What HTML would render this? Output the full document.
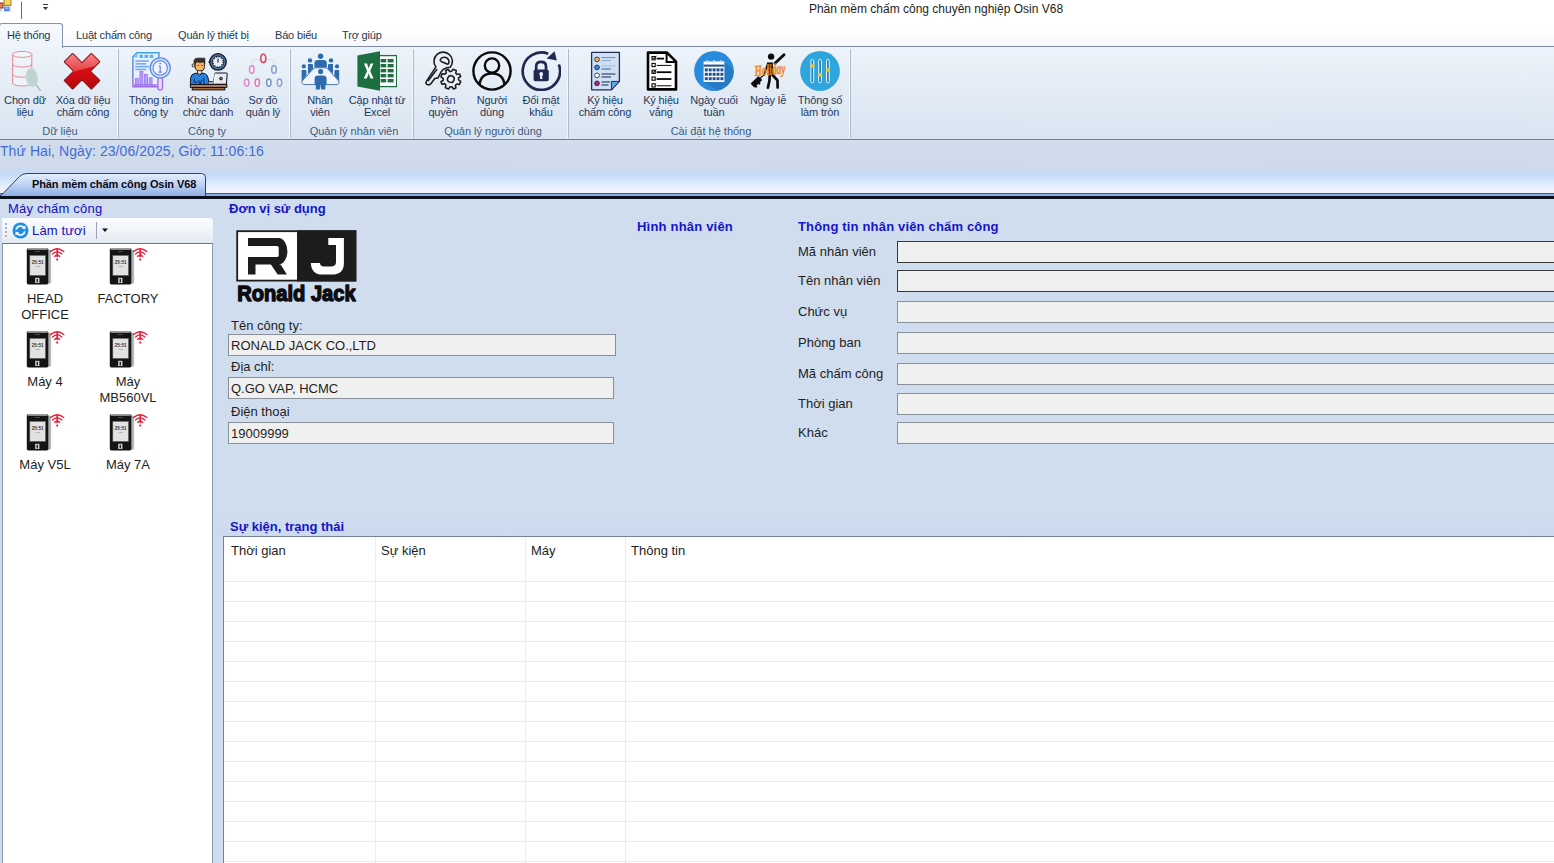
<!DOCTYPE html>
<html lang="vi">
<head>
<meta charset="utf-8">
<title>Phần mềm chấm công chuyên nghiệp Osin V68</title>
<style>
*{box-sizing:border-box;margin:0;padding:0}
html,body{width:1554px;height:863px;overflow:hidden;background:#d0ddee;font-family:"Liberation Sans",sans-serif;color:#1e1e1e}
.abs{position:absolute}
#titlebar{left:0;top:0;width:1554px;height:24px;background:#fff}
#title{left:736px;top:2px;width:400px;text-align:center;font-size:12px;line-height:14px;color:#1e1e1e;white-space:nowrap}
#tabrow{left:0;top:22px;width:1554px;height:25px;background:linear-gradient(#fff 0,#fff 35%,#f6f8fc 100%);border-bottom:1px solid #7d8da6}
.rtab{top:29px;font-size:11px;line-height:13px;color:#263850;white-space:nowrap;letter-spacing:-.17px}
#acttab{left:-1px;top:23px;width:64px;height:25px;background:linear-gradient(#f7fafd,#eef3fa);border:1px solid #8294ae;border-bottom:none;border-radius:3px 3px 0 0}
#ribbon{left:0;top:47px;width:1554px;height:93px;background:linear-gradient(#edf3fa 0,#e2ebf5 50%,#d9e5f2 100%);border-bottom:1px solid #747f90}
.sep{top:49px;width:1px;height:89px;background:#aebbcd;box-shadow:-1px 0 0 #f4f8fc}
.glab{top:125px;font-size:11px;line-height:13px;color:#3b5a82;text-align:center;white-space:nowrap}
.btn{top:94px;font-size:11px;line-height:12px;color:#1e395b;text-align:center;white-space:nowrap;letter-spacing:-.15px}
.ico{top:51px;width:40px;height:40px}
#datebar{left:0;top:140px;width:1554px;height:30px;background:linear-gradient(#d3deed 0,#cfdbeb 6px,#cfdbeb 100%)}
#date{left:0;top:143px;font-size:14px;line-height:16px;color:#426bd6;white-space:nowrap;letter-spacing:.07px}
#tabstrip{left:0;top:166px;width:1554px;height:30px;background:linear-gradient(#cfdbeb 0,#cbdaf0 4px,#c5d9f7 8px,#cfe0fa 12px,#e4eefc 20px,#f5f8fe 26.9px,#35558c 27px,#35558c 27.9px,#8faee3 28px,#8faee3 30px)}
#darkline{left:0;top:196px;width:1554px;height:3px;background:#0b1020}
#main{left:0;top:199px;width:1554px;height:664px;background:#d0ddee}
.blue{color:#1010c0}
.lbl{font-size:12px;line-height:14px;white-space:nowrap;color:#1e1e1e}
.hd{font-size:12px;line-height:14px;font-weight:bold;color:#1515c8;white-space:nowrap}
.inp{height:22px;background:#f0f0f0;border:1px solid #8a9098;font-size:13px;line-height:20px;padding-left:2px;padding-top:1px;white-space:nowrap;color:#1e1e1e}
.inpd{height:22px;background:#f0f0f0;border:1px solid #3a3a3a}
.lbl13{font-size:13px;line-height:15px;white-space:nowrap;color:#1e1e1e}
.dev{font-size:13px;line-height:16px;text-align:center;width:84px;color:#1e1e1e}
</style>
</head>
<body>
<div id="titlebar" class="abs"></div>
<div id="title" class="abs">Phần mềm chấm công chuyên nghiệp Osin V68</div>
<div id="tabrow" class="abs"></div>
<svg class="abs" style="left:0;top:0" width="60" height="22" viewBox="0 0 60 22">
<rect x="-1" y="3" width="4" height="5" fill="#e8825e" stroke="#8c3220" stroke-width="1"/>
<rect x="4" y="-1" width="7" height="6.4" fill="#f8d25c" stroke="#a47c1c" stroke-width="1"/>
<rect x="4" y="6.6" width="5.6" height="4.4" fill="#4a86e4"/><rect x="5" y="7.2" width="3.4" height="2" fill="#8ab8f8"/>
<path d="M1 8.4 L1 11.4" stroke="#9a9a9a" stroke-width="1"/>
<path d="M10.6 6 L10.6 11.6 L3 11.6" stroke="#d8d0e0" stroke-width=".8" fill="none"/>
<path d="M21.5 1.6 L21.5 19" stroke="#6a6a6a" stroke-width="1"/>
<rect x="43" y="4" width="5" height="1" fill="#3a3a3a"/>
<path d="M42.8 6.9 L48.2 6.9 L45.5 9.9Z" fill="#3a3a3a"/>
</svg>

<div id="ribbon" class="abs"></div>
<div id="acttab" class="abs"></div>
<div class="abs rtab" style="left:7px">Hệ thống</div>
<div class="abs rtab" style="left:76px">Luật chấm công</div>
<div class="abs rtab" style="left:178px">Quản lý thiết bị</div>
<div class="abs rtab" style="left:275px">Báo biểu</div>
<div class="abs rtab" style="left:342px">Trợ giúp</div>
<div class="abs sep" style="left:118px"></div>
<div class="abs sep" style="left:290px"></div>
<div class="abs sep" style="left:413px"></div>
<div class="abs sep" style="left:568px"></div>
<div class="abs sep" style="left:850px"></div>
<div class="abs glab" style="left:20px;width:80px">Dữ liệu</div>
<div class="abs glab" style="left:147px;width:120px">Công ty</div>
<div class="abs glab" style="left:294px;width:120px">Quản lý nhân viên</div>
<div class="abs glab" style="left:433px;width:120px">Quản lý người dùng</div>
<div class="abs glab" style="left:651px;width:120px">Cài đặt hệ thống</div>
<div class="abs btn" style="left:-15px;width:80px">Chọn dữ<br>liệu</div>
<div class="abs btn" style="left:43px;width:80px">Xóa dữ liệu<br>chấm công</div>
<div class="abs btn" style="left:111px;width:80px">Thông tin<br>công ty</div>
<div class="abs btn" style="left:168px;width:80px">Khai báo<br>chức danh</div>
<div class="abs btn" style="left:223px;width:80px">Sơ đồ<br>quản lý</div>
<div class="abs btn" style="left:280px;width:80px">Nhân<br>viên</div>
<div class="abs btn" style="left:337px;width:80px">Cập nhật từ<br>Excel</div>
<div class="abs btn" style="left:403px;width:80px">Phân<br>quyền</div>
<div class="abs btn" style="left:452px;width:80px">Người<br>dùng</div>
<div class="abs btn" style="left:501px;width:80px">Đổi mật<br>khẩu</div>
<div class="abs btn" style="left:565px;width:80px">Ký hiệu<br>chấm công</div>
<div class="abs btn" style="left:621px;width:80px">Ký hiệu<br>vắng</div>
<div class="abs btn" style="left:674px;width:80px">Ngày cuối<br>tuần</div>
<div class="abs btn" style="left:728px;width:80px">Ngày lễ</div>
<div class="abs btn" style="left:780px;width:80px">Thông số<br>làm tròn</div>
<!--ICONS_START-->
<!-- 1 db + magnifier -->
<svg class="abs ico" style="left:5px" viewBox="0 0 40 40">
<path d="M7.6 3.4 L7.6 32 A9.6 3 0 0 0 26.8 32 L26.8 3.4" fill="#eef3fa" stroke="#e3808c" stroke-width=".9"/>
<ellipse cx="17.2" cy="3.4" rx="9.6" ry="3" fill="#f4f6fb" stroke="#e3808c" stroke-width=".9"/>
<path d="M7.6 13.1 A9.6 3 0 0 0 26.8 13.1 M7.6 23.2 A9.6 3 0 0 0 26.8 23.2" fill="none" stroke="#e3808c" stroke-width=".9"/>
<path d="M30.6 33 L35.2 39.4" stroke="#b4bcc8" stroke-width="1.7" stroke-linecap="round"/>
<ellipse cx="26.9" cy="26.4" rx="5.4" ry="8.8" fill="#bdd5d1" stroke="#cdd2dc" stroke-width="1.5" transform="rotate(-8 26.9 26.4)"/>
</svg>
<!-- 2 red X -->
<svg class="abs ico" style="left:62px" viewBox="0 0 40 40">
<defs><linearGradient id="rx" x1="0" y1="0" x2="0" y2="1"><stop offset="0" stop-color="#e42830"/><stop offset=".5" stop-color="#d80c14"/><stop offset="1" stop-color="#b6060c"/></linearGradient>
<linearGradient id="rg" x1="0" y1="0" x2="0" y2="1"><stop offset="0" stop-color="#ffc8c8" stop-opacity=".62"/><stop offset="1" stop-color="#ff9a9a" stop-opacity=".3"/></linearGradient>
<clipPath id="xc"><path d="M10.2 2.2 L20 12.2 L29.8 2.2 L38 10.4 L28 20.2 L38 30 L29.8 38.2 L20 28.4 L10.2 38.2 L2 30 L12 20.2 L2 10.4 Z"/></clipPath></defs>
<g transform="translate(20 20.2) scale(.955) translate(-20 -20.2)">
<path d="M10.2 2.2 L20 12.2 L29.8 2.2 L38 10.4 L28 20.2 L38 30 L29.8 38.2 L20 28.4 L10.2 38.2 L2 30 L12 20.2 L2 10.4 Z" fill="url(#rx)" stroke="#7e1418" stroke-width="2.2" stroke-linejoin="round"/>
<path d="M10.2 2.2 L20 12.2 L29.8 2.2 L38 10.4 L28 20.2 L38 30 L29.8 38.2 L20 28.4 L10.2 38.2 L2 30 L12 20.2 L2 10.4 Z" fill="url(#rx)" stroke="#c41820" stroke-width=".6" stroke-linejoin="round"/>
<path d="M0 0 H40 V14 Q24 16 0 25 Z" fill="url(#rg)" clip-path="url(#xc)"/>
</g>
</svg>
<!-- 3 thong tin cong ty -->
<svg class="abs ico" style="left:131px" viewBox="0 0 40 40">
<defs><linearGradient id="tt" x1="0" y1="0" x2="0" y2="1"><stop offset="0" stop-color="#3fa6e4"/><stop offset=".5" stop-color="#6c7fe0"/><stop offset="1" stop-color="#ab68ec"/></linearGradient></defs>
<g transform="translate(.9 .3)">
<path d="M5 1.5 L27 1.5 L27 35.5 L1 35.5 L1 5.5 Z" fill="#e9f1fc"/>
<path d="M27 8 L27 1.5 L5 1.5 L1 5.5 L1 35.5 L27 35.5 L27 30" fill="none" stroke="url(#tt)" stroke-width="1.5"/>
<path d="M1 5.5 L5 5.5 L5 1.5" fill="none" stroke="#4fb4f4" stroke-width="1"/>
<g fill="#58b0f0"><rect x="7.5" y="3.5" width="3.6" height="3.2"/><rect x="12.6" y="3.5" width="3.6" height="3.2"/><rect x="17.7" y="3.5" width="3.6" height="3.2"/></g>
<g fill="#6aa6f4"><rect x="3.4" y="9" width="13.6" height="1.5"/><rect x="3.4" y="11.8" width="11" height="1.5"/><rect x="3.4" y="14.6" width="13.6" height="1.5"/><rect x="3.4" y="17.4" width="11" height="1.5"/></g>
<g fill="#b59af6" stroke="#9470ec" stroke-width=".7"><rect x="3.4" y="27" width="3" height="6.6"/><rect x="8" y="20" width="3" height="13.6"/><rect x="12.6" y="23" width="3" height="10.6"/><rect x="17.2" y="26.5" width="3" height="7.1"/><rect x="2.4" y="33.4" width="22" height="1.2"/></g>
<rect x="26" y="26" width="4.6" height="12.8" rx="2.3" fill="#eadcfb" stroke="#a468ec" stroke-width="1.3"/>
<circle cx="28.3" cy="16.6" r="10" fill="#d6e6fc" stroke="#5f8fe8" stroke-width="1.4"/>
<circle cx="28.3" cy="16.6" r="7.2" fill="#eef5fe" stroke="#6f86e8" stroke-width="1.2"/>
<path d="M28.3 14.8 L28.3 20.6 M26.6 20.8 L30 20.8 M26.8 14.8 L28.3 14.8" stroke="#6f80e8" stroke-width="1.2" fill="none"/><circle cx="28.3" cy="12.3" r=".95" fill="#6f80e8"/>
</g>
</svg>
<!-- 4 khai bao chuc danh -->
<svg class="abs ico" style="left:189px" viewBox="0 0 40 40">
<circle cx="20.4" cy="10.9" r="1" fill="#101828"/>
<circle cx="29" cy="10.9" r="8.2" fill="#4d7399" stroke="#0e1626" stroke-width="1.3"/>
<circle cx="29" cy="10.9" r="5.7" fill="#e9f0f9" stroke="#0e1626" stroke-width=".8"/>
<circle cx="29" cy="10.9" r="5" fill="none" stroke="#26334a" stroke-width="1.5" stroke-dasharray=".9 1.718"/>
<path d="M29 7.4 L29 11.6" stroke="#0e1626" stroke-width="1.1" fill="none"/>
<ellipse cx="4.6" cy="14.4" rx="1.5" ry="1.7" fill="#f8c48a" stroke="#14100e" stroke-width=".8"/>
<path d="M6.2 10.6 L15.4 10.6 L15.4 15.6 Q15.4 20.2 10.8 20.2 Q6.2 20.2 6.2 15.6Z" fill="#f9b465" stroke="#14100e" stroke-width=".9"/>
<path d="M5 11.6 Q4.6 7.2 8.6 7.2 L15.8 7.2 L15.8 12.4 L14.4 10.8 L11 11.4 L7.4 10.6 L6.4 12.8 Z" fill="#3a3232" stroke="#14100e" stroke-width=".7" stroke-linejoin="round"/>
<circle cx="9.2" cy="14.4" r=".55" fill="#2a1a14"/><circle cx="13" cy="14.4" r=".55" fill="#2a1a14"/>
<rect x="8.6" y="19.8" width="4.2" height="3.2" fill="#fbe6cf" stroke="#14100e" stroke-width=".7"/>
<path d="M1.4 33.4 L1.6 27 Q2 23 6 22.4 L8.4 22.2 L10.7 24.4 L13 22.2 L15 22.4 Q18 23 18.8 26 L19.8 30.8 L23.4 30.8 L23.4 33.4Z" fill="#2b82e2" stroke="#0e1626" stroke-width="1"/>
<path d="M5.2 27.4 L5.2 31 L8.6 31 M14.6 26.6 L15.2 33 M9.6 29.4 L11.2 33 L12.8 28.6" stroke="#12305e" stroke-width="1.1" fill="none"/>
<rect x="19.2" y="31" width="6.6" height="2" fill="#eceef2" stroke="#0e1626" stroke-width=".6"/>
<path d="M26 22 L37.6 22 Q38.4 22 38.2 22.8 L37.4 33.2 L24.2 33.2Z" fill="#e9ebf1" stroke="#0e1018" stroke-width="1"/>
<path d="M26.4 22.6 L25 32.6" stroke="#fafbfd" stroke-width="1.4"/>
<circle cx="32" cy="27.6" r="1.8" fill="#1c2028"/><circle cx="32.2" cy="27.4" r=".6" fill="#c8ccd4"/>
<rect x="1.4" y="33.6" width="36.4" height="2.7" fill="#c2946a" stroke="#0e1018" stroke-width="1"/>
<rect x="3.2" y="36.5" width="32.6" height="2.4" fill="#a36a3c" stroke="#0e1018" stroke-width="1"/>
</svg>
<!-- 5 so do quan ly -->
<svg class="abs ico" style="left:243px" viewBox="0 0 40 40">
<path d="M8.8 14.6 L8.8 10.4 Q8.8 8.4 10.8 8.4 L17.4 8.4 M23.2 8.4 L29 8.4 Q31 8.4 31 10.4 L31 14.6" fill="none" stroke="#e2d6e4" stroke-width="1"/>
<g stroke-width="1.55">
<ellipse cx="20.3" cy="7.4" rx="2.5" ry="4.1" stroke="#cc4668" fill="#fbeff3"/>
<ellipse cx="8.8" cy="18.5" rx="2.3" ry="3.7" stroke="#d98ccf" fill="#fbf2fa"/>
<ellipse cx="31" cy="18.5" rx="2.3" ry="3.7" stroke="#84a4d0" fill="#f2f6fc"/>
<ellipse cx="3.7" cy="31.6" rx="2.2" ry="3.7" stroke="#d98ccf" fill="#fbf2fa"/>
<ellipse cx="14.3" cy="31.6" rx="2.2" ry="3.7" stroke="#de7cb0" fill="#fbf2fa"/>
<ellipse cx="25.8" cy="31.6" rx="2.2" ry="3.7" stroke="#7496c8" fill="#f2f6fc"/>
<ellipse cx="36.5" cy="31.6" rx="2.2" ry="3.7" stroke="#86a6cc" fill="#f2f6fc"/>
</g>
</svg>
<!-- 6 nhan vien -->
<svg class="abs ico" style="left:300px" viewBox="0 0 40 40">
<g fill="#2c6cae">
<circle cx="20.6" cy="5.2" r="2.7"/><path d="M14.4 16.6 L14.4 12.4 Q14.4 9 17.8 9 L23.4 9 Q26.8 9 26.8 12.4 L26.8 16.6Z"/>
<circle cx="10" cy="9.4" r="2.2"/><path d="M8 13 L12 13 Q13 13 13 14.2 L13 18 L8 23Z"/>
<circle cx="31" cy="9.4" r="2.2"/><path d="M33 13 L29 13 Q28 13 28 14.2 L28 18 L33 23Z"/>
<circle cx="3.8" cy="15.4" r="2.1"/><path d="M1.6 19 L5.4 19 Q6.4 19 6.4 20 L6.4 24.6 L1.6 30.6Z"/>
<circle cx="37" cy="15.4" r="2.1"/><path d="M39.2 19 L35.4 19 Q34.4 19 34.4 20 L34.4 24.6 L39.2 30.6Z"/>
</g>
<path d="M14.4 16.8 L26.8 16.8 L38.6 30 Q40 33.4 36 33.6 L5 33.6 Q1 33.4 2.2 30Z" fill="#f2f6fc" stroke="#3c6a9c" stroke-width=".9"/>
<g fill="#2c6cae"><circle cx="20.6" cy="20.6" r="2.6"/><path d="M14.6 34 L14.6 28 Q14.6 24.6 18 24.6 L23.2 24.6 Q26.6 24.6 26.6 28 L26.6 34 L25.4 34 L25.4 38.6 L21.2 38.6 L20.6 33 L20 38.6 L15.8 38.6 L15.8 34Z"/></g>
</svg>
<!-- 7 excel -->
<svg class="abs ico" style="left:357px" viewBox="0 0 40 40">
<rect x="20" y="4.6" width="19.6" height="31" fill="#fff" stroke="#1d6f42" stroke-width="1.3"/>
<g fill="#1d6f42"><rect x="23.6" y="8" width="5.6" height="3.4"/><rect x="30.6" y="8" width="6" height="3.4"/><rect x="23.6" y="13" width="5.6" height="3.4"/><rect x="30.6" y="13" width="6" height="3.4"/><rect x="23.6" y="18" width="5.6" height="3.4"/><rect x="30.6" y="18" width="6" height="3.4"/><rect x="23.6" y="23" width="5.6" height="3.4"/><rect x="30.6" y="23" width="6" height="3.4"/><rect x="23.6" y="28" width="5.6" height="3.4"/><rect x="30.6" y="28" width="6" height="3.4"/></g>
<path d="M0.4 4.6 L23 0.2 L23 39.8 L0.4 35.4Z" fill="#1d6f42"/>
<path d="M7 12.6 L10 12.6 L11.7 17.4 L13.5 12.6 L16.3 12.6 L13.2 20 L16.5 27.6 L13.5 27.6 L11.6 22.6 L9.8 27.6 L6.8 27.6 L10.1 20Z" fill="#fff"/>
</svg>
<!-- 8 phan quyen -->
<svg class="abs ico" style="left:423px" viewBox="0 0 40 40">
<g fill="none" stroke="#1e1e1e" stroke-width="1.6" stroke-linejoin="round" stroke-linecap="round">
<path d="M12.85 15.84 L3.4 30.4 Q2.2 32.8 4.4 33.6 Q6.6 34.4 8 32.6 L11.8 27.5 L15 26.9 L18.4 20.4 Q21.5 16.4 27.25 16.2 A9.2 9.2 0 1 0 12.85 15.84 Z"/>
<path d="M17.4 8.4 Q19 5.4 23 6.6 Q26.4 8 25.8 12 Q25.4 13.4 24 13 L18.2 10.4 Q16.8 9.6 17.4 8.4 Z"/>
<path d="M13.7 18.6 L5.4 29.6"/>
</g>
<g transform="translate(27.9 27.9) rotate(22.5)"><path d="M-1.7 -9.8 L1.7 -9.8 L2.3 -7.2 L4 -6.4 L6.2 -7.9 L8.1 -6 L6.6 -3.8 L7.4 -2.1 L10 -1.5 L10 1.9 L7.4 2.5 L6.6 4.2 L8.1 6.4 L6.2 8.3 L4 6.8 L2.3 7.6 L1.7 10.2 L-1.7 10.2 L-2.3 7.6 L-4 6.8 L-6.2 8.3 L-8.1 6.4 L-6.6 4.2 L-7.4 2.5 L-10 1.9 L-10 -1.5 L-7.4 -2.1 L-6.6 -3.8 L-8.1 -6 L-6.2 -7.9 L-4 -6.4 L-2.3 -7.2 Z" fill="#ecf1f9" stroke="#1e1e1e" stroke-width="1.6" stroke-linejoin="round"/><circle cx="0" cy=".2" r="3.3" fill="#ecf1f9" stroke="#1e1e1e" stroke-width="1.6"/></g>
</svg>
<!-- 9 nguoi dung -->
<svg class="abs ico" style="left:472px" viewBox="0 0 40 40">
<circle cx="20" cy="20" r="18.6" fill="none" stroke="#0a0a0a" stroke-width="2.4"/>
<circle cx="20" cy="14.6" r="7.2" fill="none" stroke="#0a0a0a" stroke-width="2.4"/>
<path d="M7.4 33.4 Q9 22.6 20 22.4 Q31 22.6 32.6 33.4" fill="none" stroke="#0a0a0a" stroke-width="2.4"/>
</svg>
<!-- 10 doi mat khau -->
<svg class="abs ico" style="left:521px" viewBox="0 0 40 40">
<path d="M37.8 13.4 A18.7 18.7 0 1 1 27.2 2.8" fill="none" stroke="#1e2a52" stroke-width="2.7"/>
<path d="M25.6 7.4 L33.6 0.2 L35.8 9.4Z" fill="#1e2a52"/>
<path d="M15.2 19 L15.2 15.4 Q15.2 10.8 20.1 10.8 Q25 10.8 25 15.4 L25 19" fill="none" stroke="#1e2a52" stroke-width="2.7"/>
<rect x="12.6" y="18.4" width="15.2" height="11.8" rx="1.8" fill="#1e2a52"/>
<circle cx="20.2" cy="23" r="1.9" fill="#eef3fa"/><path d="M19.3 23.6 L21.1 23.6 L21.4 28 L19 28Z" fill="#eef3fa"/>
</svg>
<!-- 11 ky hieu cham cong -->
<svg class="abs ico" style="left:585px" viewBox="0 0 40 40">
<path d="M6.6 1.4 L34.4 1.4 L34.4 30.4 L26.4 38.8 L6.6 38.8Z" fill="#cfe0f5" stroke="#1e2f58" stroke-width="1.3" stroke-linejoin="round"/>
<path d="M26.4 38.8 L26.4 30.4 L34.4 30.4Z" fill="#5aa6e6" stroke="#1e2f58" stroke-width="1" stroke-linejoin="round"/>
<circle cx="12" cy="8.4" r="2.4" fill="#f2b64a" stroke="#1e2f58" stroke-width=".9"/>
<circle cx="12" cy="16.4" r="2.4" fill="#3a88d8" stroke="#1e2f58" stroke-width=".9"/>
<circle cx="12" cy="24.4" r="2.4" fill="#fff" stroke="#1e2f58" stroke-width=".9"/>
<circle cx="12" cy="32.4" r="2.4" fill="#c0206c" stroke="#1e2f58" stroke-width=".9"/>
<g stroke-linecap="butt" fill="none">
<path d="M16.4 6.6 L30.4 6.6" stroke="#6c8cc0" stroke-width="1"/><path d="M16.4 9.6 L26 9.6" stroke="#8aa6d0" stroke-width="1"/>
<path d="M16.4 15 L30.4 15" stroke="#a4b8d8" stroke-width="1"/><path d="M16.4 18 L26 18" stroke="#4c68a0" stroke-width="1.1"/>
<path d="M16.4 23 L30.4 23" stroke="#1e2f58" stroke-width="1.05"/><path d="M16.4 26 L26 26" stroke="#1e2f58" stroke-width="1.05"/>
<path d="M16.4 31 L25 31" stroke="#1e2f58" stroke-width="1.05"/><path d="M16.4 34 L23.4 34" stroke="#1e2f58" stroke-width="1.05"/>
</g>
</svg>
<!-- 12 ky hieu vang -->
<svg class="abs ico" style="left:641px" viewBox="0 0 40 40">
<path d="M7 1.6 L26 1.6 L35 10.6 L35 38.4 L7 38.4Z" fill="#fff" stroke="#050505" stroke-width="2.6" stroke-linejoin="round"/>
<path d="M25.6 2 L25.6 11 L34.6 11" fill="none" stroke="#050505" stroke-width="2"/>
<g fill="#fff" stroke="#050505" stroke-width="1.1"><rect x="11" y="5.6" width="3.2" height="3.2"/><rect x="11" y="12.4" width="3.2" height="3.2"/><rect x="11" y="19.2" width="3.2" height="3.2"/><rect x="11" y="26" width="3.2" height="3.2"/><rect x="11" y="32.8" width="3.2" height="3.2"/></g>
<g stroke="#050505" fill="none"><path d="M15.6 7.6 L23 7.6" stroke-width="1.8"/><path d="M15.6 14.4 L30.4 14.4" stroke-width="1"/><path d="M15.6 21.2 L30.4 21.2" stroke-width="1.8"/><path d="M15.6 28 L30.4 28" stroke-width="1.8"/><path d="M15.6 34.8 L30.4 34.8" stroke-width="1"/>
<path d="M11.6 6.6 L12.6 8 L15.4 4.8 M11.6 20.2 L12.6 21.6 L15.4 18.4" stroke-width="1"/></g>
</svg>
<!-- 13 ngay cuoi tuan -->
<svg class="abs ico" style="left:694px" viewBox="0 0 40 40">
<circle cx="20" cy="20" r="19.9" fill="#2a8bdc"/>
<path d="M30.4 10.4 L39.6 19.8 A19.9 19.9 0 0 1 23 39.6 L9.8 31 Z" fill="#2579c6"/>
<rect x="9.6" y="10.4" width="20.8" height="20.6" fill="#fff"/>
<rect x="9.6" y="13.6" width="20.8" height="2" fill="#1f4f96"/>
<g fill="#1f4f96">
<rect x="10.8" y="17.4" width="3" height="3"/><rect x="14.7" y="17.4" width="3" height="3"/><rect x="18.6" y="17.4" width="3" height="3"/><rect x="22.5" y="17.4" width="3" height="3"/><rect x="26.4" y="17.4" width="3" height="3"/>
<rect x="10.8" y="21.8" width="3" height="3"/><rect x="14.7" y="21.8" width="3" height="3"/><rect x="18.6" y="21.8" width="3" height="3"/><rect x="22.5" y="21.8" width="3" height="3"/><rect x="26.4" y="21.8" width="3" height="3"/>
<rect x="10.8" y="26.2" width="3" height="3"/><rect x="14.7" y="26.2" width="3" height="3"/><rect x="18.6" y="26.2" width="3" height="3"/><rect x="22.5" y="26.2" width="3" height="3"/><rect x="26.4" y="26.2" width="3" height="3"/></g>
<g fill="#cfe2f6"><rect x="12.6" y="9.2" width="1.6" height="2.8"/><rect x="19.2" y="9.2" width="1.6" height="2.8"/><rect x="25.8" y="9.2" width="1.6" height="2.8"/></g>
</svg>
<!-- 14 ngay le -->
<svg class="abs ico" style="left:748px" viewBox="0 0 40 40">
<g fill="none" stroke="#0c0c0e" stroke-linecap="round" stroke-linejoin="round">
<path d="M27 12.2 L36 3.8" stroke-width="2.9"/>
<path d="M22 11.6 L23.2 23.4" stroke-width="5.2" stroke-linecap="butt"/>
<path d="M21.8 23.8 L21.4 30 L19.9 36.8" stroke-width="2.7"/>
<path d="M24.6 24 L29.5 29.4 L29.6 36.6" stroke-width="2.7"/>
<path d="M20 12.4 L16.2 23.8" stroke-width="2"/>
<path d="M15.8 24.2 L12.4 27" stroke-width="1.1"/>
</g>
<circle cx="23.1" cy="5.6" r="3.2" fill="#0c0c0e"/>
<g transform="translate(8.4 30.8) rotate(-44)" fill="#0c0c0e"><rect x="-5.5" y="-2.8" width="11" height="5.6" rx="1"/><rect x="-4.6" y="2.4" width="2.2" height="1.8" rx=".6"/><rect x="-.2" y="2.4" width="2.2" height="1.8" rx=".6"/></g>
<text x="0" y="0" font-family="Liberation Serif, serif" font-style="italic" font-weight="bold" font-size="9.4" fill="#f0861e" stroke="#f0861e" stroke-width=".45" fill-opacity=".92" stroke-opacity=".8" transform="translate(7 25) rotate(-5) scale(1 1.6)">Holiday</text>
</svg>
<!-- 15 thong so lam tron -->
<svg class="abs ico" style="left:800px" viewBox="0 0 40 40">
<circle cx="20" cy="20" r="19.9" fill="#2fa5de"/>
<g fill="#2285bd" stroke="#eaf5fc" stroke-width="1"><rect x="10.9" y="8.4" width="2.8" height="23.4" rx="1.4"/><rect x="18.7" y="8.4" width="2.8" height="23.4" rx="1.4"/><rect x="26.5" y="8.4" width="2.8" height="23.4" rx="1.4"/></g>
<g fill="#f2c432"><rect x="10.2" y="13.2" width="4.2" height="3.4" rx=".8"/><rect x="18" y="22" width="4.2" height="3.4" rx=".8"/><rect x="25.8" y="17.2" width="4.2" height="3.4" rx=".8"/></g>
</svg>
<!--ICONS_END-->

<div id="datebar" class="abs"></div>
<div id="tabstrip" class="abs"></div>
<div id="date" class="abs">Thứ Hai, Ngày: 23/06/2025, Giờ: 11:06:16</div>
<div id="darkline" class="abs"></div>
<div id="main" class="abs"></div>
<div class="abs" style="left:213px;top:516px;width:1341px;height:21px;background:linear-gradient(#d0ddee,#ccdaf1)"></div>
<svg class="abs" style="left:0;top:172px" width="210" height="24" viewBox="0 0 210 24">
<defs><linearGradient id="tg" x1="0" y1="0" x2="0" y2="1"><stop offset="0" stop-color="#e6effc"/><stop offset=".45" stop-color="#bfd3f3"/><stop offset="1" stop-color="#86a8e0"/></linearGradient></defs>
<path d="M-3 26 L2 22.5 L19.5 4.5 Q22.5 1.5 27 1.5 L201.5 1.5 Q205.5 1.5 205.5 5.5 L205.5 26 Z" fill="url(#tg)" stroke="#2a4068" stroke-width="1"/>
</svg>
<div class="abs" style="left:32px;top:178px;font-size:11px;line-height:13px;font-weight:bold;color:#0a0a14;white-space:nowrap;letter-spacing:-0.1px">Phần mềm chấm công Osin V68</div>

<div class="abs blue" style="left:8px;top:201px;font-size:13px;line-height:15px;white-space:nowrap;letter-spacing:.2px">Máy chấm công</div>
<div class="abs" style="left:2px;top:218px;width:211px;height:25px;background:linear-gradient(#fbfcfe,#eef2f8 60%,#e4eaf3);border-radius:0 4px 0 0"></div>
<div class="abs" style="left:5px;top:223px;width:2px;height:15px;background:repeating-linear-gradient(#aab4c4 0,#aab4c4 2px,transparent 2px,transparent 4px)"></div>
<svg class="abs" style="left:12px;top:222px" width="17" height="17" viewBox="0 0 17 17"><circle cx="8.5" cy="8.5" r="8" fill="#1e8fe8"/><path d="M4.2 7.6 A4.4 4.4 0 0 1 12.2 6" fill="none" stroke="#fff" stroke-width="1.7"/><path d="M12.8 9.4 A4.4 4.4 0 0 1 4.8 11" fill="none" stroke="#fff" stroke-width="1.7"/><path d="M13.6 3.6 L13.4 7.4 L9.8 6.2Z" fill="#fff"/><path d="M3.4 13.4 L3.6 9.6 L7.2 10.8Z" fill="#fff"/></svg>
<div class="abs blue" style="left:32px;top:223px;font-size:13px;line-height:15px;white-space:nowrap;letter-spacing:.15px">Làm tươi</div>
<div class="abs" style="left:96px;top:222px;width:1px;height:17px;background:#9aa6b8"></div>
<svg class="abs" style="left:101px;top:227px" width="8" height="6" viewBox="0 0 8 6"><path d="M1 1.5 L7 1.5 L4 5Z" fill="#111"/></svg>
<div class="abs" style="left:2px;top:243px;width:211px;height:625px;background:#fff;border:1px solid #8c9ab0;border-top-color:#70757c"></div>
<svg width="0" height="0" style="position:absolute"><defs>
<linearGradient id="dvs" x1="0" y1="0" x2="1" y2="0"><stop offset="0" stop-color="#8a8a8a"/><stop offset="1" stop-color="#c8c8c8"/></linearGradient>
<g id="dv">
<path d="M22.5 2.2 L26.2 3 L26.2 36 L22.5 37.2Z" fill="url(#dvs)"/>
<rect x="1.8" y="1" width="21.4" height="36.4" rx="1.6" fill="#141414"/>
<rect x="2.6" y="1.2" width="20" height="1.5" fill="#bdbdbd"/>
<rect x="4.8" y="8.3" width="15.8" height="20.2" fill="#e2e2e2"/>
<rect x="4.8" y="8.3" width="15.8" height="20.2" fill="none" stroke="#555" stroke-width=".6"/>
<text x="12.7" y="16.6" text-anchor="middle" font-family="Liberation Sans, sans-serif" font-weight="bold" font-size="4.6" fill="#333">25:51</text>
<rect x="10.5" y="19.2" width="4.5" height=".6" fill="#999"/>
<rect x="10" y="4.3" width="5" height=".7" fill="#666"/>
<rect x="10.2" y="30.8" width="4.2" height="5.2" fill="#d8d8d8"/>
<rect x="11.6" y="31.8" width="1.4" height="3.6" fill="#222"/>
<g fill="none" stroke="#e8223c" stroke-linecap="round">
<path d="M25.6 4.6 Q32.2 -1.2 38.8 4.6" stroke-width="1.3"/>
<path d="M27.6 7 Q32.2 2.8 36.8 7" stroke-width="1.3"/>
<path d="M29.6 9.4 Q32.2 7 34.8 9.4" stroke-width="1.3"/>
<path d="M32.2 1 L32.2 10.2" stroke-width="1.7" stroke-linecap="butt"/>
</g>
<circle cx="32.2" cy="12.6" r="1.1" fill="#d8203a"/>
</g></defs></svg>
<svg class="abs" style="left:25px;top:247px" width="40" height="40"><use href="#dv"/></svg>
<svg class="abs" style="left:108px;top:247px" width="40" height="40"><use href="#dv"/></svg>
<svg class="abs" style="left:25px;top:330px" width="40" height="40"><use href="#dv"/></svg>
<svg class="abs" style="left:108px;top:330px" width="40" height="40"><use href="#dv"/></svg>
<svg class="abs" style="left:25px;top:413px" width="40" height="40"><use href="#dv"/></svg>
<svg class="abs" style="left:108px;top:413px" width="40" height="40"><use href="#dv"/></svg>
<div class="abs dev" style="left:3px;top:291px">HEAD<br>OFFICE</div>
<div class="abs dev" style="left:86px;top:291px">FACTORY</div>
<div class="abs dev" style="left:3px;top:374px">Máy 4</div>
<div class="abs dev" style="left:86px;top:374px">Máy<br>MB560VL</div>
<div class="abs dev" style="left:3px;top:457px">Máy V5L</div>
<div class="abs dev" style="left:86px;top:457px">Máy 7A</div>


<div class="abs hd" style="left:229px;top:201px;font-size:13px;line-height:15px">Đơn vị sử dụng</div>
<svg class="abs" style="left:236px;top:229px" width="122" height="76" viewBox="0 0 122 76">
<rect x="1.2" y="2.2" width="118.2" height="49.4" fill="#fff" stroke="#1c1c1c" stroke-width="1.8"/>
<rect x="61" y="1.4" width="59.3" height="51" fill="#1c1c1c"/>
<path d="M12 9.1 L42.7 9.1 A8.7 13.15 0 0 1 42.7 35.4 L44.6 35.4 L50.9 45.4 L41.7 45.4 L34.9 35.4 L19.5 35.4 L19.5 45.4 L12 45.4 L12 28.1 L41 28.1 Q42.7 28.1 42.7 26.4 L42.7 18.6 Q42.7 16.9 41 16.9 L12 16.9 Z" fill="#1c1c1c"/>
<path d="M92.3 9.1 L107.9 9.1 L107.9 34 Q107.9 45.6 96 45.6 L86.5 45.6 Q75.5 45.6 74.8 33.9 L84 33.9 Q84.3 37.4 88 37.4 L95.5 37.4 Q100 37.4 100 33 L100 15.9 L92.3 15.9 Z" fill="#fff"/>
<text x="1.2" y="72.4" font-family="Liberation Sans, sans-serif" font-weight="bold" font-size="22" textLength="118.4" lengthAdjust="spacingAndGlyphs" fill="#0c0c10" stroke="#0c0c10" stroke-width="1.4" stroke-linejoin="round">Ronald Jack</text>
</svg>
<div class="abs lbl13" style="left:231px;top:318px">Tên công ty:</div>
<div class="abs inp" style="left:228px;top:334px;width:388px">RONALD JACK CO.,LTD</div>
<div class="abs lbl13" style="left:231px;top:359px">Địa chỉ:</div>
<div class="abs inp" style="left:228px;top:377px;width:386px">Q.GO VAP, HCMC</div>
<div class="abs lbl13" style="left:231px;top:404px">Điện thoại</div>
<div class="abs inp" style="left:228px;top:422px;width:386px">19009999</div>

<div class="abs hd" style="left:637px;top:219px;font-size:13px;line-height:15px;letter-spacing:.2px">Hình nhân viên</div>
<div class="abs hd" style="left:798px;top:219px;font-size:13px;line-height:15px;letter-spacing:.17px">Thông tin nhân viên chấm công</div>
<div class="abs lbl13" style="left:798px;top:244px">Mã nhân viên</div>
<div class="abs lbl13" style="left:798px;top:273px">Tên nhân viên</div>
<div class="abs lbl13" style="left:798px;top:304px">Chức vụ</div>
<div class="abs lbl13" style="left:798px;top:335px">Phòng ban</div>
<div class="abs lbl13" style="left:798px;top:366px">Mã chấm công</div>
<div class="abs lbl13" style="left:798px;top:396px">Thời gian</div>
<div class="abs lbl13" style="left:798px;top:425px">Khác</div>
<div class="abs inpd" style="left:897px;top:241px;width:700px"></div>
<div class="abs inpd" style="left:897px;top:270px;width:700px"></div>
<div class="abs inp" style="left:897px;top:301px;width:700px"></div>
<div class="abs inp" style="left:897px;top:332px;width:700px"></div>
<div class="abs inp" style="left:897px;top:363px;width:700px"></div>
<div class="abs inp" style="left:897px;top:393px;width:700px"></div>
<div class="abs inp" style="left:897px;top:422px;width:700px"></div>

<div class="abs hd" style="left:230px;top:519px;font-size:13px;line-height:15px">Sự kiện, trạng thái</div>
<div class="abs" style="left:223px;top:536px;width:1400px;height:340px;background:#fff;border:1px solid #7a828e"></div>
<div class="abs" style="left:224px;top:581px;width:1330px;height:282px;background:repeating-linear-gradient(#ebebeb 0,#ebebeb 1px,transparent 1px,transparent 20px)"></div>
<div class="abs" style="left:375px;top:537px;width:1px;height:326px;background:#ececec"></div>
<div class="abs" style="left:525px;top:537px;width:1px;height:326px;background:#ececec"></div>
<div class="abs" style="left:625px;top:537px;width:1px;height:326px;background:#ececec"></div>
<div class="abs lbl13" style="left:231px;top:543px">Thời gian</div>
<div class="abs lbl13" style="left:381px;top:543px">Sự kiện</div>
<div class="abs lbl13" style="left:531px;top:543px">Máy</div>
<div class="abs lbl13" style="left:631px;top:543px">Thông tin</div>

</body>
</html>
